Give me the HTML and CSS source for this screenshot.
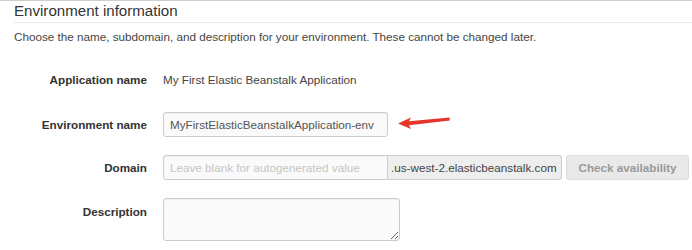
FILE: index.html
```html
<!DOCTYPE html>
<html>
<head>
<meta charset="utf-8">
<link rel="stylesheet" href="styles.css">
</head>
<body>
<div class="page">
  <h2 class="title">Environment information</h2>
  <p class="intro">Choose the name, subdomain, and description for your environment. These cannot be changed later.</p>
  <div class="form">
    <div class="row row-app">
      <div class="label">Application name</div>
      <div class="value">My First Elastic Beanstalk Application</div>
    </div>
    <div class="row">
      <div class="label">Environment name</div>
      <div class="field">
        <input class="input env" type="text" value="MyFirstElasticBeanstalkApplication-env">
        <svg class="arrow" width="58" height="14" viewBox="0 0 58 14"><path d="M1 8.5 L14 2.5 L12 6.3 L52.5 2.6 L52.8 5.4 L12 10.2 L14 14 Z" fill="#e8352c"/></svg>
      </div>
    </div>
    <div class="row">
      <div class="label">Domain</div>
      <div class="field">
        <input class="input domain" type="text" placeholder="Leave blank for autogenerated value">
        <span class="addon">.us-west-2.elasticbeanstalk.com</span>
        <button class="btn" type="button">Check availability</button>
      </div>
    </div>
    <div class="row row-top">
      <div class="label">Description</div>
      <div class="field">
        <textarea class="textarea"></textarea>
      </div>
    </div>
  </div>
</div>
</body>
</html>
```
FILE: styles.css
```css
html, body {
  margin: 0;
  padding: 0;
  background: #fff;
}
body {
  font-family: "Liberation Sans", Arial, sans-serif;
  font-size: 11.7px;
  color: #444;
}
.page {
  border-top: 1px solid #cfcfcf;
  padding-left: 14px;
  height: 249px;
  overflow: hidden;
}
.title {
  margin: 0;
  font-size: 15.1px;
  font-weight: normal;
  color: #333;
  line-height: 19px;
  padding-top: 0;
  padding-bottom: 2px;
  border-bottom: 1px solid #e8e8e8;
}
.intro {
  margin: 0;
  padding-top: 7px;
  line-height: 14px;
  color: #444;
}
.form {
  display: flex;
  flex-direction: column;
  gap: 18px;
  margin-top: 23px;
}
.row {
  display: flex;
  align-items: center;
  gap: 16px;
}
.row-app {
  height: 25px;
  margin-bottom: 2px;
}
.row-top {
  align-items: flex-start;
}
.row-top .label {
  padding-top: 7px;
}
.label {
  width: 133px;
  flex: none;
  text-align: right;
  font-weight: bold;
  color: #333;
}
.value {
  color: #444;
}
.field {
  display: flex;
  align-items: center;
}
.input {
  box-sizing: border-box;
  width: 225px;
  height: 25px;
  margin: 0;
  padding: 0 6px;
  border: 1px solid #ccc;
  border-radius: 3px;
  background: #fafafa;
  box-shadow: inset 0 1px 1px rgba(0, 0, 0, 0.05);
  font-family: "Liberation Sans", Arial, sans-serif;
  font-size: 11.7px;
  color: #555;
  outline: none;
}
.input::placeholder {
  color: #c4c4c4;
}
.domain {
  border-radius: 3px 0 0 3px;
}
.arrow {
  margin-left: 9px;
  margin-top: -5px;
}
.addon {
  box-sizing: border-box;
  height: 25px;
  display: flex;
  align-items: center;
  padding: 0 4px 0 3px;
  width: 174px;
  border: 1px solid #ccc;
  border-left: none;
  border-radius: 0 3px 3px 0;
  background: #eee;
  color: #444;
  white-space: nowrap;
}
.btn {
  box-sizing: border-box;
  margin-left: 4px;
  width: 123px;
  height: 25px;
  border: 1px solid #ddd;
  border-radius: 3px;
  background: #e9e9e9;
  color: #9a9a9a;
  font-family: "Liberation Sans", Arial, sans-serif;
  font-size: 11.7px;
  font-weight: bold;
  padding: 0;
}
.textarea {
  box-sizing: border-box;
  width: 237px;
  height: 43px;
  margin: 0;
  border: 1px solid #ccc;
  border-radius: 3px;
  background: #fafafa;
  box-shadow: inset 0 1px 1px rgba(0, 0, 0, 0.05);
  display: block;
}
```
